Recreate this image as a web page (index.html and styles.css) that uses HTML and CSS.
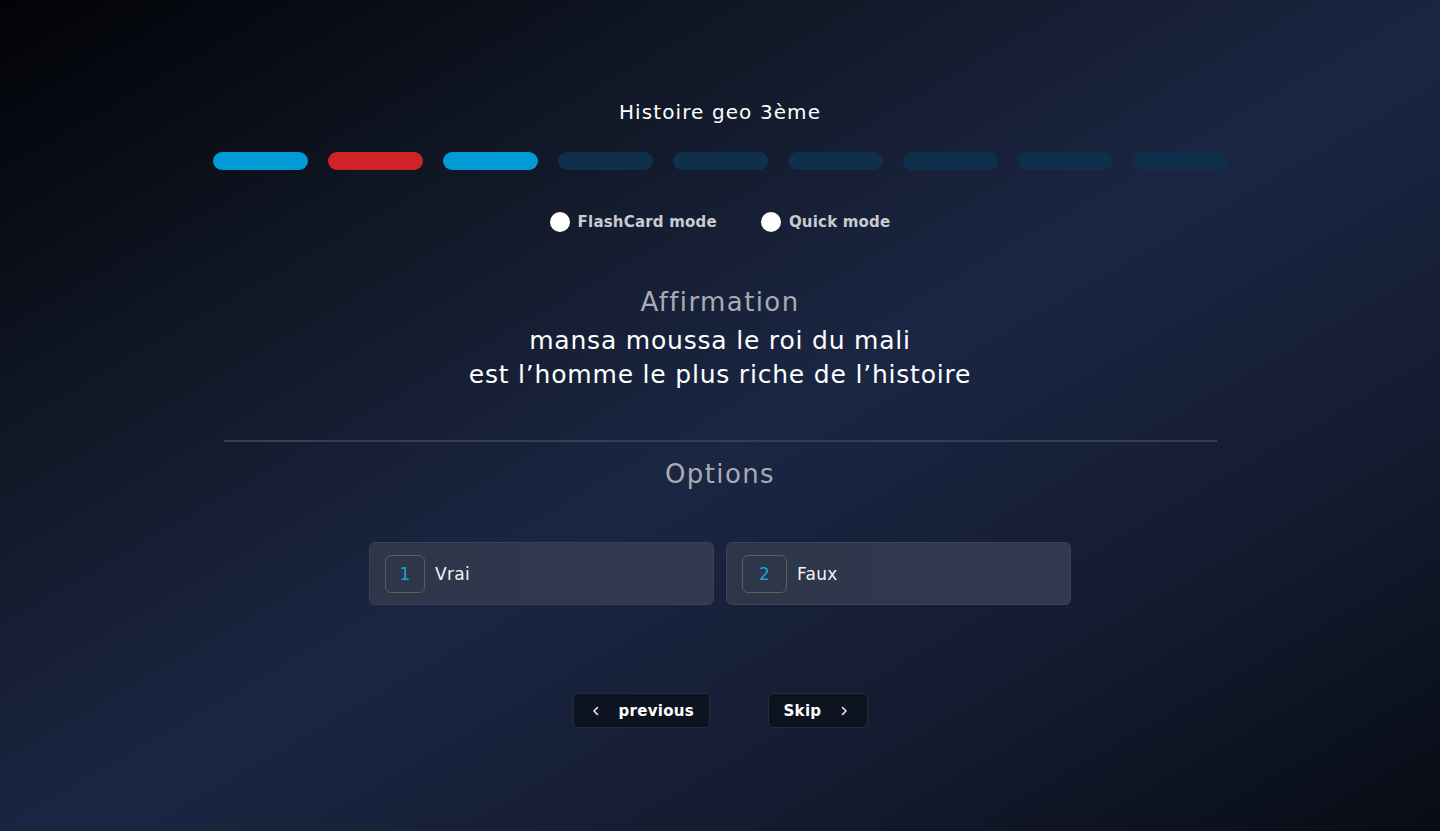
FILE: index.html
```html
<!DOCTYPE html>
<html lang="fr">
<head>
<meta charset="utf-8">
<title>Histoire geo 3ème</title>
<link rel="stylesheet" href="styles.css">
</head>
<body>
<main class="quiz">
  <h1 class="quiz-title">Histoire geo 3ème</h1>
  <div class="progress">
    <span class="step step-ok"></span>
    <span class="step step-bad"></span>
    <span class="step step-ok"></span>
    <span class="step"></span>
    <span class="step"></span>
    <span class="step"></span>
    <span class="step"></span>
    <span class="step"></span>
    <span class="step"></span>
  </div>
  <div class="modes">
    <label class="mode"><span class="radio"></span>FlashCard mode</label>
    <label class="mode"><span class="radio"></span>Quick mode</label>
  </div>
  <h2 class="section-label">Affirmation</h2>
  <p class="statement">mansa moussa le roi du mali<br>est l’homme le plus riche de l’histoire</p>
  <hr class="divider">
  <h2 class="section-label options-label">Options</h2>
  <div class="options">
    <button class="option"><span class="option-key">1</span><span class="option-text">Vrai</span></button>
    <button class="option"><span class="option-key">2</span><span class="option-text">Faux</span></button>
  </div>
  <div class="nav">
    <button class="nav-btn nav-prev">
      <svg width="14" height="14" viewBox="0 0 14 14" fill="none"><path d="M8.5 3.5 5 7l3.5 3.5" stroke="#e8eaee" stroke-width="1.6" stroke-linecap="round" stroke-linejoin="round"/></svg>
      <span>previous</span>
    </button>
    <button class="nav-btn nav-skip">
      <span>Skip</span>
      <svg width="14" height="14" viewBox="0 0 14 14" fill="none"><path d="M5.5 3.5 9 7l-3.5 3.5" stroke="#e8eaee" stroke-width="1.6" stroke-linecap="round" stroke-linejoin="round"/></svg>
    </button>
  </div>
</main>
</body>
</html>
```
FILE: styles.css
```css
* { box-sizing: border-box; }
html, body { margin: 0; height: 100%; }
body {
  min-height: 831px;
  background: linear-gradient(to bottom right, #020307 0%, #111827 28%, #1b2643 52%, #141c31 75%, #080c15 100%);
  font-family: "DejaVu Sans", "Noto Sans", sans-serif;
  color: #fff;
  overflow: hidden;
}
.quiz {
  display: flex;
  flex-direction: column;
  align-items: center;
  padding-top: 100px;
}
.quiz-title {
  margin: 0;
  font-size: 20px;
  line-height: 24px;
  font-weight: 500;
  letter-spacing: 1.1px;
}
.progress {
  display: flex;
  gap: 20px;
  margin-top: 28px;
}
.step {
  width: 95px;
  height: 18px;
  border-radius: 9px;
  background: #0f2f4a;
}
.step-ok { background: #009bd6; }
.step-bad { background: #cf2427; }
.modes {
  display: flex;
  gap: 44px;
  margin-top: 42px;
}
.mode {
  display: flex;
  align-items: center;
  gap: 8px;
  height: 20px;
  font-size: 15px;
  font-weight: bold;
  color: #c9cbd1;
  letter-spacing: 0.2px;
}
.radio {
  width: 20px;
  height: 20px;
  border-radius: 50%;
  background: #fff;
}
.section-label {
  margin: 54px 0 0;
  font-size: 26px;
  line-height: 32px;
  font-weight: 500;
  color: #a8abb4;
  letter-spacing: 1.4px;
}
.statement {
  margin: 6px 0 0;
  font-size: 25px;
  line-height: 34px;
  font-weight: 500;
  text-align: center;
  letter-spacing: 0.8px;
}
.divider {
  width: 993px;
  margin: 48px 0 0;
  border: 0;
  height: 2px;
  background: #353e52;
}
.options-label { margin-top: 16px; }
.options {
  display: flex;
  gap: 12px;
  margin-top: 52px;
}
.option {
  display: flex;
  align-items: center;
  gap: 10px;
  width: 345px;
  height: 63px;
  padding: 0 15px;
  border: 1px solid #3a4357;
  border-radius: 6px;
  background: linear-gradient(to right, #2e3649, #313a51);
  font-family: inherit;
  cursor: pointer;
}
.option-key {
  display: flex;
  align-items: center;
  justify-content: center;
  width: 40px;
  height: 38px;
  border: 1px solid #5a5d63;
  border-radius: 6px;
  color: #1ba0d8;
  font-size: 17px;
}
.option:nth-child(2) .option-key { width: 45px; }
.option-text {
  color: #f3f4f6;
  font-size: 17px;
  letter-spacing: 0.3px;
}
.nav {
  display: flex;
  gap: 58px;
  margin-top: 88px;
}
.nav-btn {
  display: flex;
  align-items: center;
  height: 35px;
  border: 1px solid #262c3a;
  border-radius: 5px;
  background: #0e1320;
  color: #fff;
  font-family: inherit;
  font-size: 15px;
  font-weight: bold;
  letter-spacing: 0.3px;
  cursor: pointer;
}
.nav-prev { width: 137px; padding: 0 0 0 15px; gap: 16px; }
.nav-skip { width: 100px; padding: 0 0 0 15px; gap: 16px; }
```
